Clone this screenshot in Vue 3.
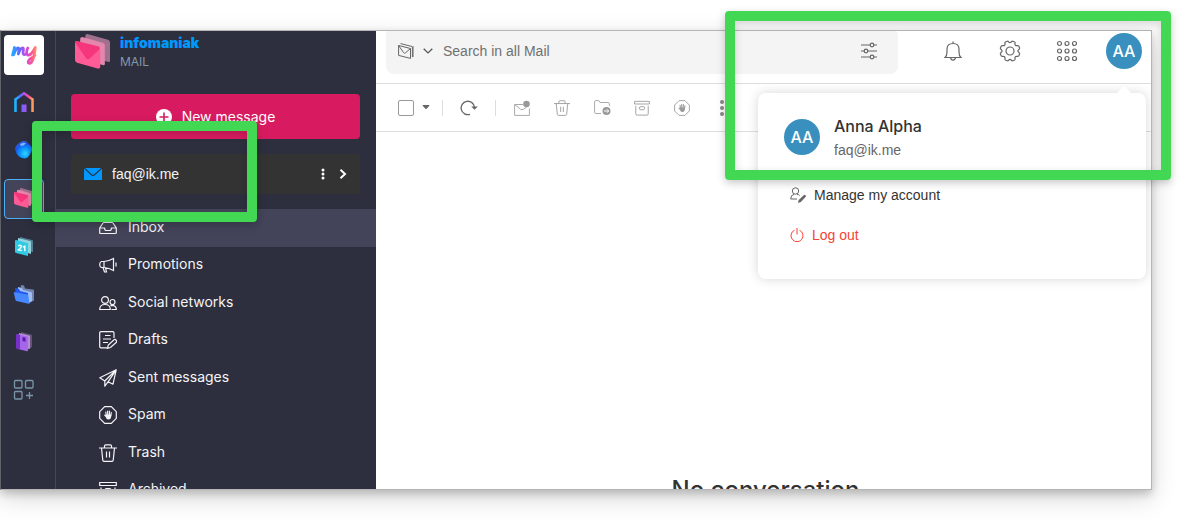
<script setup>
import { ref } from 'vue'

const query = ref('')

const folders = [
  { name: 'Inbox', icon: 'inbox' },
  { name: 'Promotions', icon: 'promo' },
  { name: 'Social networks', icon: 'social' },
  { name: 'Drafts', icon: 'draft' },
  { name: 'Sent messages', icon: 'sent' },
  { name: 'Spam', icon: 'spam' },
  { name: 'Trash', icon: 'trash' },
  { name: 'Archived', icon: 'archive' },
]
</script>

<template>
  <div class="page">
    <svg class="defs" aria-hidden="true">
      <defs>
        <linearGradient id="rainbow" x1="0" y1="0" x2="1" y2="0">
          <stop offset="0" stop-color="#18b8ff" />
          <stop offset=".3" stop-color="#5a6cff" />
          <stop offset=".55" stop-color="#c04be8" />
          <stop offset=".78" stop-color="#ff4f9a" />
          <stop offset="1" stop-color="#ff9a5a" />
        </linearGradient>
        <linearGradient id="script" gradientUnits="userSpaceOnUse" x1="1" y1="0" x2="27" y2="0">
          <stop offset="0" stop-color="#18b8ff" />
          <stop offset=".3" stop-color="#5a6cff" />
          <stop offset=".55" stop-color="#c04be8" />
          <stop offset=".78" stop-color="#ff4f9a" />
          <stop offset="1" stop-color="#ff9a5a" />
        </linearGradient>
        <linearGradient id="door" x1="0" y1="0" x2="1" y2="0">
          <stop offset="0" stop-color="#6a66ff" />
          <stop offset="1" stop-color="#b050f0" />
        </linearGradient>
        <radialGradient id="orb" cx=".6" cy=".72" r=".75">
          <stop offset="0" stop-color="#35d6ff" />
          <stop offset=".4" stop-color="#0a9bff" />
          <stop offset=".8" stop-color="#1c50e8" />
          <stop offset="1" stop-color="#3b78f0" />
        </radialGradient>
        <symbol id="mail-logo" viewBox="0 0 34 34">
          <path d="M12 0 32 5.500Q34 6 34 8V26Q34 28 32 27L12 22Q10 21 10 19V2Q10 0 12 0Z" fill="#a0718f" />
          <path d="M7 3 27 8.500Q29 9 29 11V29Q29 31 27 30L7 25Q5 24 5 22V5Q5 3 7 3Z" fill="#e487ac" />
          <path d="M2 7 22 12Q24.500 12.500 24.500 15V32Q24.500 34 22 33.500L2 28Q0 27 0 25V9Q0 7 2 7Z" fill="#ff5b96" />
          <path d="M0 8Q0 6.500 2 7L22 12Q24.500 12.500 24 14.500L14 24Q12 25.500 10.500 23Z" fill="#f5357c" />
        </symbol>
        <symbol id="spam-shape" viewBox="0 0 18 18">
          <path d="M5.700.700h6.600l5 5v6.600l-5 5H5.700l-5-5V5.700Z" fill="none" stroke="currentColor" />
          <path d="M7.300 9.500 6.800 6M8.800 9 8.600 5M10.400 9 10.500 5.200M11.800 9.500 12.300 6.500M7.500 11 5.700 9.200" fill="none" stroke="currentColor" stroke-width="1.200" stroke-linecap="round" />
          <path d="M6.700 8.600h5.700l-.2 2.400q-.4 2.600-2.700 2.600-1.700 0-2.400-1.600Z" fill="currentColor" stroke="none" />
        </symbol>
        <symbol id="trash-shape" viewBox="0 0 18 18">
          <g fill="none" stroke="currentColor"><path d="M0 4h18M5.500 4V2q0-1.200 1.200-1.200h4.600q1.200 0 1.200 1.200v2M2.500 4l1.300 12.300q.1 1 1.200 1h8q1.100 0 1.200-1L15.500 4M7.500 7.500v6M10.500 7.500v6" /></g>
        </symbol>
        <symbol id="archive-shape" viewBox="0 0 18 18">
          <g fill="none" stroke="currentColor"><path d="M.700 1.500h16.600v3H.700ZM2 6.500v9q0 1.500 1.500 1.500h11q1.500 0 1.500-1.500v-9" /><rect x="6" y="7.500" width="6" height="3.500" rx="1.700" /></g>
        </symbol>
      </defs>
    </svg>

    <div class="window">
      <nav class="rail" aria-label="Applications">
        <a class="app logo" href="#" aria-label="my">
          <svg width="28" height="22" viewBox="0 0 28 22" fill="none" stroke="url(#script)" stroke-width="2.800" stroke-linecap="round" stroke-linejoin="round">
            <path d="M2.500 11 4.500 3.500 3.700 10.500Q6.500 3 8.500 4Q9.500 4.500 8.300 10Q11 3 13 4Q14 4.500 13 8.500Q13 11 15 10.500" />
            <path d="M17.800 4Q15.500 9.500 17.500 11Q20.500 11.500 23 7.500L25.300 3.500Q24.500 12 22.500 16.500Q20.500 20.500 18.500 19Q17.500 17 20.500 14.500Q23 13 25 11.500" />
          </svg>
        </a>
        <a class="app" href="#" aria-label="Home">
          <svg width="22" height="22" viewBox="0 0 22 22"><path d="M2.500 21V8.500L11 2.300l8.500 6.200V21" fill="none" stroke="url(#rainbow)" stroke-width="2.600" /><path d="M8.500 13.500h5V21h-5Z" fill="url(#door)" /></svg>
        </a>
        <a class="app" href="#" aria-label="Assistant">
          <svg width="20" height="20" viewBox="0 0 20 20"><path d="M10 1q3 0 5 3l2 2q2 3 0 6l-2 4q-2 3.500-7 2-5-2-6-6Q0 8 3 5q4-4 7-4Z" fill="url(#orb)" /><path d="M6 4.500Q9 1.500 12 3.500 9 6 7 6Z" fill="#b8dcff" opacity=".7" /></svg>
        </a>
        <a class="app current" href="#" aria-label="Mail" aria-current="page">
          <svg width="20" height="20"><use href="#mail-logo" /></svg>
        </a>
        <a class="app" href="#" aria-label="Calendar">
          <svg width="20" height="20" viewBox="0 0 20 20"><path d="m6 1 12 3q1 .2 1 1v11l-13-3Z" fill="#547f95" /><path d="m4 2 12 3q1 .2 1 1v12L4 14Z" fill="#8fd4df" /><path d="m2 4 11 3q1 .2 1 1v12L2 17q-1-.3-1-1V5q0-1 1-1Z" fill="#2fcbe4" /><path d="M4.300 9.800q2.700-1.300 3 .7 0 1.200-2.800 3.300l3.300.7M8.800 11l2-.8v5" fill="none" stroke="#fff" stroke-width="1.400" /></svg>
        </a>
        <a class="app" href="#" aria-label="Drive">
          <svg width="22" height="20" viewBox="0 0 22 20"><path d="m8 1 3 .500 1 3 8 1q1 0 1 1v10l-4 2L7 12Z" fill="#7185b5" /><path d="m5 3 4 1 1 2 8 2q1 0 1 1v8l-3 2L4 14Z" fill="#9dbdf5" /><path d="m2 4 4 1 1 2 8 2v7L4 17Z" fill="#2257ee" /><path d="m1 8 13 2.500q1 .2 1.200 1l1.300 8.500L3.500 17q-.8-.2-1-1L.800 9q-.1-1 .2-1Z" fill="#4688ff" /></svg>
        </a>
        <a class="app" href="#" aria-label="Contacts">
          <svg width="18" height="20" viewBox="0 0 18 20"><path d="m6 0 10 2.500q1 .2 1 1V15l-3 2L6 14Z" fill="#65537c" /><path d="m4 1 10 2.500q1 .2 1 1V17L4 15Z" fill="#b78fd8" /><path d="m2 2 10 2.500q1 .2 1 1v13q0 1-1 .8L3 17q-1-.3-1-1Z" fill="#a566e8" /><path d="M2 2 5 3v14.500L2 17q-1-.3-1-1V3q0-1 1-1Z" fill="#7430c8" /><path d="m7.500 5 3 .700v4.500L9 9l-1.500.5Z" fill="#5c19b0" /></svg>
        </a>
        <a class="app" href="#" aria-label="All applications">
          <svg width="22" height="22" viewBox="0 0 22 22" fill="none" stroke="#7896a8" stroke-width="1.300"><rect x="1.500" y="1.500" width="7.500" height="7.500" rx="1" /><rect x="12.500" y="1.500" width="7.500" height="7.500" rx="1" /><rect x="1.500" y="12.500" width="7.500" height="7.500" rx="1" /><path d="M16.500 13v7M13 16.500h7" /></svg>
        </a>
      </nav>

      <aside class="sidebar">
        <div class="brand">
          <svg width="35" height="35"><use href="#mail-logo" /></svg>
          <div>
            <div class="brand-name">infomaniak</div>
            <div class="brand-app">MAIL</div>
          </div>
        </div>

        <button class="compose" type="button">
          <svg width="16" height="16" viewBox="0 0 16 16"><circle cx="8" cy="8" r="8" fill="#fff" /><path d="M8 3.500v9M3.500 8h9" stroke="#d81b60" stroke-width="1.600" /></svg>
          New message
        </button>

        <div class="account">
          <svg width="18" height="12" viewBox="0 0 18 12"><path d="M0 0h18v12H0Z" fill="#0098ff" /><path d="m0 0 7.500 6.800q1.500 1.400 3 0L18 0" fill="none" stroke="#26384b" stroke-width="1.200" /></svg>
          <span class="account-name">faq@ik.me</span>
          <button type="button" aria-label="Account options"><svg width="4" height="12" viewBox="0 0 4 12" fill="#fff"><circle cx="2" cy="2" r="1.500" /><circle cx="2" cy="6" r="1.500" /><circle cx="2" cy="10" r="1.500" /></svg></button>
          <button type="button" aria-label="Switch account"><svg width="8" height="10" viewBox="0 0 8 10"><path d="m1.500.800 4.500 4.200-4.500 4.200" fill="none" stroke="#fff" stroke-width="2" /></svg></button>
        </div>

        <nav class="folders" aria-label="Folders">
          <a v-for="(folder, i) in folders" :key="folder.name" href="#" :class="['folder', { selected: i === 0 }]">
            <svg width="18" height="18" viewBox="0 0 18 18" fill="none" stroke="#f4f4f7" stroke-width="1.200" color="#f4f4f7">
              <path v-if="folder.icon === 'inbox'" d="M.700 9 4 4Q4.400 3.500 5 3.500h8q.6 0 1 .500L17.300 9v4.500q0 1-1 1H1.700q-1 0-1-1ZM.700 9H5.500q0 2.500 2 2.500h3q2 0 2-2.500h4.800" />
              <path v-else-if="folder.icon === 'promo'" d="M5 5.500Q10 5 14.500 2.500v12Q10 12 5 11.500H2.500Q.700 11 .700 8.500T2.500 5.500ZM5 5.500v6M4 11.500 5.500 16h2L6.500 11.700M17 6.500v4" />
              <g v-else-if="folder.icon === 'social'"><circle cx="6" cy="6" r="3.400" /><path d="M.700 15.500q0-5 5.300-5t5.300 5ZM12.500 15.500h4.800q0-3.800-3.800-4.200-1.300 0-2 .7" /><circle cx="13.500" cy="8" r="2.500" /></g>
              <path v-else-if="folder.icon === 'draft'" d="M15 7V2q0-1.300-1.300-1.300H2Q.700.700.700 2v13.500q0 1.300 1.300 1.300h6M6 4.500h5.500M4 8h8M4 11.500h5M8.500 17.300l.8-3.300L15 8.700q1.500-.7 2.300.8t-.5 2.200L11.500 16.500Z" />
              <path v-else-if="folder.icon === 'sent'" stroke-linejoin="round" d="M17.200.800.800 8.800l5 3.200ZM17.200.800 14 15.200 9 12.800ZM5.800 12v5.200L9 12.800" />
              <use v-else-if="folder.icon === 'spam'" href="#spam-shape" />
              <use v-else-if="folder.icon === 'trash'" href="#trash-shape" />
              <use v-else href="#archive-shape" />
            </svg>
            <span class="folder-name">{{ folder.name }}</span>
          </a>
        </nav>
      </aside>

      <main class="main">
        <header class="header">
          <div class="search">
            <button type="button" class="scope" aria-label="Search scope">
              <svg width="16" height="16" viewBox="0 0 16 16" fill="none" stroke="#666"><path d="M.600 2.500 12.500 5.500v9.900L.600 12.400ZM.600 2.500 5.500 9.500q1 1.200 2 .3l5-4.300M2.500.600l11.900 3v10.500" /><path d="M15.500 3v11" stroke="#aaa" /></svg>
              <svg width="10" height="6" viewBox="0 0 10 6"><path d="m.700.700 4.300 4.200L9.300.700" fill="none" stroke="#555" stroke-width="1.300" /></svg>
            </button>
            <input v-model="query" type="search" aria-label="Search in all Mail" placeholder="Search in all Mail">
            <button type="button" aria-label="Search filters">
              <svg width="16" height="18" viewBox="0 0 16 18" fill="#f4f4f4" stroke="#666" stroke-width="1.200"><path d="M0 3h16M0 9h16M0 15h16" /><circle cx="11" cy="3" r="1.800" /><circle cx="5" cy="9" r="1.800" /><circle cx="11" cy="15" r="1.800" /></svg>
            </button>
          </div>
          <div class="actions">
            <button type="button" aria-label="Notifications"><svg width="18" height="20" viewBox="0 0 18 20" fill="none" stroke="#666" stroke-width="1.200"><path d="M9 .500v2M1 16.500q2-1.500 2-5.500V8q0-5.500 6-5.500T15 8v3q0 4 2 5.500ZM6.500 16.700q.5 2.500 2.500 2.500t2.500-2.500" /></svg></button>
            <button type="button" aria-label="Settings"><svg width="22" height="22" viewBox="0 0 22 22" fill="none" stroke="#666" stroke-width="1.200"><circle cx="11" cy="11" r="4" /><path d="M11 2.700c1.500 0 1.300-2 2.700-1.500s2 .8 2 .8c1 .6-.4 2.200.7 3.200s2.700-.3 3.300.8l.9 2c.4 1.400-1.700 1.400-1.700 3s2.100 1.600 1.700 3l-.9 2c-.6 1.100-2.200-.2-3.300.8s.3 2.600-.7 3.200l-2 .8c-1.400.5-1.200-1.500-2.700-1.500s-1.300 2-2.700 1.500l-2-.8c-1-.6.400-2.200-.7-3.200s-2.700.3-3.300-.8l-.9-2c-.4-1.400 1.700-1.400 1.700-3S1 9.400 1.400 8l.9-2c.6-1.100 2.200.2 3.300-.8S5.300 2.600 6.300 2l2-.8c1.400-.5 1.200 1.500 2.700 1.500Z" /></svg></button>
            <button type="button" aria-label="Applications"><svg width="22" height="22" viewBox="0 0 22 22" fill="none" stroke="#666" stroke-width="1.200"><template v-for="y in 3" :key="y"><circle v-for="x in 3" :key="x" :cx="x * 7.500 - 4" :cy="y * 7.500 - 4" r="2" /></template></svg></button>
            <button type="button" class="avatar" aria-label="Anna Alpha's account">AA</button>
          </div>
        </header>

        <div class="toolbar">
          <input type="checkbox" aria-label="Select all">
          <button type="button" class="caret" aria-label="Selection options"><svg width="8" height="5" viewBox="0 0 8 5"><path d="M1 .500h6L4 3.800Z" fill="#666" stroke="#666" stroke-linejoin="round" /></svg></button>
          <span class="divider first"></span>
          <button type="button" aria-label="Refresh"><svg width="18" height="16" viewBox="0 0 18 16"><path d="M10 14.300a6.700 6.700 0 1 1 4.500-7" fill="none" stroke="#666" stroke-width="1.300" /><path d="m11.200 6.500 3.300 3.300L17.800 6.500Z" fill="#666" /></svg></button>
          <span class="divider"></span>
          <div class="tools">
            <button type="button" aria-label="Mark as unread"><svg width="16" height="16" viewBox="0 0 16 16"><path d="M9 4.500H.600v10.900h14.800V8.500M.600 4.500l5.900 4.700q1.500 1 3 0l3-2" fill="none" stroke="#aaa" /><circle cx="12.500" cy="4" r="3.300" fill="#999" /></svg></button>
            <button type="button" aria-label="Delete"><svg width="16" height="16"><use href="#trash-shape" /></svg></button>
            <button type="button" aria-label="Move"><svg width="17" height="16" viewBox="0 0 17 16"><path d="M7 13.500H1.800q-1.200 0-1.200-1.200V1.800Q.600.600 1.800.600h3L6 2.500h8.200q1.200 0 1.200 1.200V6" fill="none" stroke="#aaa" /><circle cx="12.500" cy="11" r="4" fill="#999" /><path d="M10 11h4.500M13 9.300l1.700 1.700L13 12.700" fill="none" stroke="#fff" /></svg></button>
            <button type="button" aria-label="Archive"><svg width="16" height="16"><use href="#archive-shape" /></svg></button>
            <button type="button" aria-label="Report spam"><svg width="16" height="16"><use href="#spam-shape" /></svg></button>
            <button type="button" aria-label="More"><svg width="4" height="16" viewBox="0 0 4 16" fill="#888"><circle cx="2" cy="2" r="2" /><circle cx="2" cy="8" r="2" /><circle cx="2" cy="14" r="2" /></svg></button>
          </div>
        </div>

        <h1 class="empty">No conversation</h1>
      </main>

      <section class="popup" aria-label="Account">
        <div class="profile">
          <span class="avatar">AA</span>
          <div>
            <div class="profile-name">Anna Alpha</div>
            <div class="profile-mail">faq@ik.me</div>
          </div>
        </div>
        <a class="entry" href="#">
          <svg width="16" height="16" viewBox="0 0 16 16"><circle cx="5.500" cy="4" r="3.200" fill="none" stroke="#666" /><path d="M7 12H.700q-.2-4 3.500-4.700M7 7.300q2 .2 2.700 1.200" fill="none" stroke="#666" /><path d="m8 16 .7-3 5-4.800q1-.7 1.800.1t0 1.800l-4.700 5Z" fill="#666" /></svg>
          Manage my account
        </a>
        <a class="entry logout" href="#">
          <svg width="14" height="14" viewBox="0 0 14 14" fill="none" stroke="#f44336"><path d="M4.500 2.200a6 6 0 1 0 5 0M7 0v6.500" /></svg>
          Log out
        </a>
      </section>
    </div>

    <div class="mark mark-account"></div>
    <div class="mark mark-profile"></div>
  </div>
</template>

<style>
body {
  background: #fff;
}
</style>

<style scoped>
.page,
.page * {
  box-sizing: border-box;
}

.page {
  position: relative;
  height: 100vh;
  padding: 30px 30px 30px 0;
  overflow: hidden;
  font-family: Inter, "Liberation Sans", sans-serif;
  font-size: 14px;
  line-height: 20px;
}

.defs {
  position: absolute;
  width: 0;
  height: 0;
}

a {
  color: inherit;
  text-decoration: none;
}

button {
  display: flex;
  align-items: center;
  justify-content: center;
  padding: 0;
  border: 0;
  background: none;
  color: inherit;
  font: inherit;
}

svg {
  flex: none;
}

.window {
  position: relative;
  display: flex;
  height: 100%;
  overflow: hidden;
  border: 1px solid #b5b5b5;
  border-left-color: #606269;
  background: #fff;
  box-shadow: 0 4px 8px rgba(0, 0, 0, 0.18), 0 8px 24px rgba(0, 0, 0, 0.16);
}

.rail {
  display: flex;
  flex: none;
  flex-direction: column;
  gap: 8px;
  width: 55px;
  padding: 4px 3px;
  border-right: 1px solid #434655;
  background: #2d2f3e;
}

.app {
  display: flex;
  flex: none;
  align-items: center;
  justify-content: center;
  width: 40px;
  height: 40px;
  padding-bottom: 2px;
  border-radius: 4px;
}

.logo {
  padding-bottom: 0;
  background: #fff;
}

.current {
  border: 1px solid #4cb0f9;
  background: #434359;
}

.sidebar {
  flex: none;
  width: 320px;
  background: #2d2f3e;
  color: #f4f4f7;
}

.brand {
  display: flex;
  gap: 10px;
  height: 63px;
  padding: 3px 19px;
}

.brand-name {
  color: #0098ff;
  font-size: 14px;
  font-weight: 900;
  line-height: 18px;
}

.brand-app {
  color: #8299a9;
  font-size: 12px;
}

.compose {
  gap: 10px;
  width: calc(100% - 31px);
  height: 45px;
  margin-left: 15px;
  border-radius: 4px;
  background: #d81b60;
  color: #fff;
}

.account {
  display: flex;
  align-items: center;
  height: 40px;
  margin: 15px 16px 15px 15px;
  padding: 0 7px 0 13px;
  border-radius: 4px;
  background: #333;
}

.account-name {
  flex: 1;
  margin-left: 10px;
  font-family: "Liberation Sans", Arial, sans-serif;
}

.account button {
  width: 20px;
  height: 20px;
}

.folders {
  display: grid;
  grid-template-rows: repeat(8, 1fr);
  height: 300px;
}

.folder {
  display: flex;
  align-items: center;
  gap: 11px;
  padding-left: 43px;
}

.folder-name {
  padding-bottom: 2px;
}

.selected {
  background: #434359;
}

.main {
  flex: 1;
  min-width: 0;
  overflow: hidden;
}

.header {
  display: flex;
  gap: 37px;
  height: 53px;
  padding: 0 9px 0 10px;
  border-bottom: 1px solid #ddd;
}

.search {
  display: flex;
  flex: 1;
  align-items: center;
  height: 43px;
  padding: 0 21px 3px 12px;
  border-radius: 2px 4px 8px 8px;
  background: #f4f4f4;
}

.scope {
  gap: 9px;
}

.search input {
  flex: 1;
  min-width: 0;
  margin-left: 10px;
  padding: 0;
  border: 0;
  outline: 0;
  background: none;
  color: #333;
  font-family: "Liberation Sans", Arial, sans-serif;
  font-size: 14px;
  line-height: 20px;
}

.search input::placeholder {
  color: #707070;
  opacity: 1;
}

.actions {
  display: flex;
  gap: 21px;
  padding-top: 2px;
}

.actions button {
  width: 36px;
  height: 36px;
}

.avatar {
  display: flex;
  align-items: center;
  justify-content: center;
  width: 36px;
  height: 36px;
  border-radius: 50%;
  background: #3990be;
  color: #fff;
  font-size: 16px;
  font-weight: 500;
}

.toolbar {
  display: flex;
  align-items: center;
  height: 48px;
  padding-left: 22px;
  border-bottom: 1px solid #ddd;
  color: #999;
}

.toolbar input {
  width: 16px;
  height: 16px;
  margin: 0;
  border: 1px solid #999;
  border-radius: 2px;
  appearance: none;
  background: #fff;
}

.toolbar button {
  width: 24px;
  height: 24px;
}

.toolbar .caret {
  width: 16px;
  margin-left: 4px;
}

.divider {
  width: 1px;
  height: 16px;
  margin: 0 14px;
  background: #ddd;
}

.first {
  margin-left: 8px;
}

.tools {
  display: flex;
  gap: 16px;
}

.empty {
  margin: 342px 0 0;
  padding-left: 4px;
  color: #333;
  font-size: 24px;
  font-weight: 500;
  line-height: 32px;
  text-align: center;
}

.popup {
  position: absolute;
  top: 62px;
  right: 5px;
  width: 388px;
  height: 186px;
  padding: 21px 26px;
  border-radius: 8px;
  background: #fff;
  box-shadow: 0 0 12px rgba(0, 0, 0, 0.16);
  color: #333;
}

.popup::before {
  position: absolute;
  top: -5px;
  right: 17px;
  width: 10px;
  height: 10px;
  background: #fff;
  content: "";
  transform: rotate(45deg);
}

.profile {
  display: flex;
  align-items: center;
  gap: 14px;
  margin-bottom: 15px;
}

.profile-name {
  margin-bottom: 2px;
  font-size: 16px;
  font-weight: 500;
  line-height: 24px;
}

.profile-mail {
  color: #666;
  font-family: "Liberation Sans", Arial, sans-serif;
}

.entry {
  display: flex;
  align-items: center;
  gap: 8px;
  height: 40px;
  padding-left: 6px;
  font-family: "Liberation Sans", Arial, sans-serif;
}

.logout {
  color: #f44336;
}

.mark {
  position: absolute;
  border: 10px solid #43d854;
  border-radius: 4px;
  box-shadow: 0 3px 8px rgba(0, 0, 0, 0.22), inset 0 3px 8px rgba(0, 0, 0, 0.16);
  pointer-events: none;
}

.mark-account {
  top: 121px;
  left: 32px;
  width: 225px;
  height: 101px;
}

.mark-profile {
  top: 11px;
  right: 11px;
  width: 446px;
  height: 169px;
}
</style>
